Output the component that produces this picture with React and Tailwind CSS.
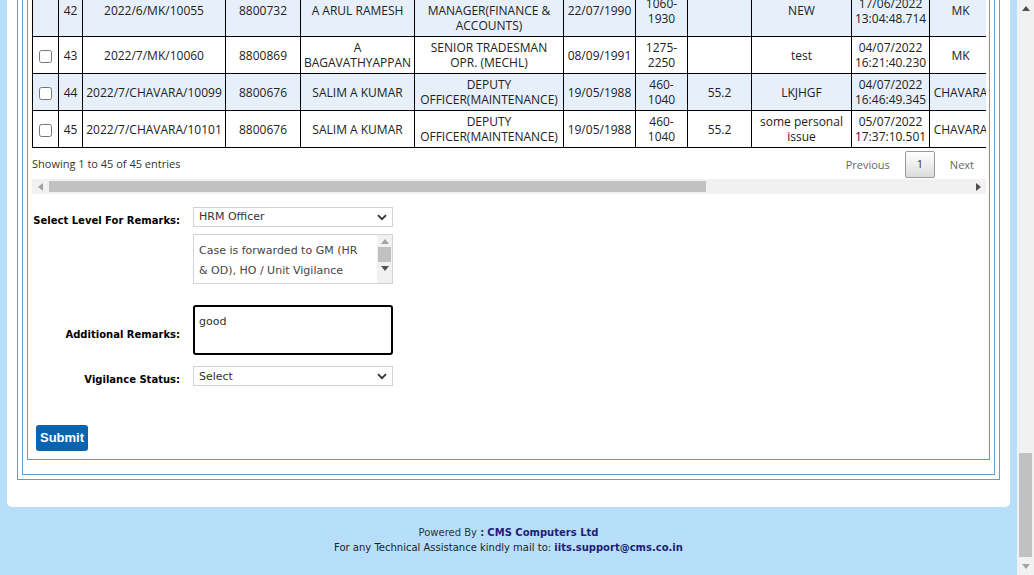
import React from 'react';

const colWidths = [
  'w-[26px]', 'w-[24px]', 'w-[143px]', 'w-[75px]', 'w-[114px]', 'w-[149px]',
  'w-[72px]', 'w-[52px]', 'w-[64px]', 'w-[100px]', 'w-[78px]', 'w-[62px]',
  'w-[125px]', 'w-[125px]', 'w-[126px]',
];

const rows = [
  {
    sl: 42, no: '2022/6/MK/10055', emp: '8800732', name: 'A ARUL RAMESH',
    desig: 'DEPUTY\nMANAGER(FINANCE &\nACCOUNTS)', dob: '22/07/1990', scale: '1060-\n1930',
    pct: '', remark: 'NEW', dt: '17/06/2022\n13:04:48.714', unit: 'MK', box: false,
  },
  {
    sl: 43, no: '2022/7/MK/10060', emp: '8800869', name: 'A\nBAGAVATHYAPPAN',
    desig: 'SENIOR TRADESMAN\nOPR. (MECHL)', dob: '08/09/1991', scale: '1275-\n2250',
    pct: '', remark: 'test', dt: '04/07/2022\n16:21:40.230', unit: 'MK', box: true,
  },
  {
    sl: 44, no: '2022/7/CHAVARA/10099', emp: '8800676', name: 'SALIM A KUMAR',
    desig: 'DEPUTY\nOFFICER(MAINTENANCE)', dob: '19/05/1988', scale: '460-\n1040',
    pct: '55.2', remark: 'LKJHGF', dt: '04/07/2022\n16:46:49.345', unit: 'CHAVARA', box: true,
  },
  {
    sl: 45, no: '2022/7/CHAVARA/10101', emp: '8800676', name: 'SALIM A KUMAR',
    desig: 'DEPUTY\nOFFICER(MAINTENANCE)', dob: '19/05/1988', scale: '460-\n1040',
    pct: '55.2', remark: 'some personal\nissue', dt: '05/07/2022\n17:37:10.501', unit: 'CHAVARA', box: true,
  },
];

const cell = 'border border-black px-[2px] py-[3px] align-middle whitespace-pre-line overflow-hidden';

const Chevron = () => (
  <svg width="10" height="7" viewBox="0 0 10 7" className="shrink-0">
    <path d="M1 1.2 L5 5.2 L9 1.2" fill="none" stroke="#333" strokeWidth="1.8" />
  </svg>
);

const FakeSelect = ({ value, lift }) => (
  <div className="flex h-[20px] w-[200px] items-center justify-between border border-[#d0d4d9] bg-white pl-[5px] pr-[5px] text-[11px] text-[#333]">
    <span className={lift}>{value}</span>
    <Chevron />
  </div>
);

const Tri = ({ dir, color }) => {
  const pts = {
    up: '0,5 4,0 8,5',
    down: '0,0 8,0 4,5',
    left: '5,0 5,8 0,4',
    right: '0,0 0,8 5,4',
  }[dir];
  const w = dir === 'left' || dir === 'right' ? 5 : 8;
  const h = dir === 'left' || dir === 'right' ? 8 : 5;
  return (
    <svg width={w} height={h} viewBox={`0 0 ${w} ${h}`}>
      <polygon points={pts} fill={color} />
    </svg>
  );
};

const App = () => {
  return (
    <div className="flex h-[575px] w-full overflow-hidden bg-[#b8dff9]">
      {/* page content, scrolled to bottom */}
      <div className="flex min-w-0 flex-1 flex-col justify-end overflow-hidden">
        <div className="shrink-0 mx-[7px] rounded-b-[5px] bg-white px-[10px] pb-[27px]">
          <div className="border border-[#5b9fd6] px-[4px] pb-[4px]">
            <div className="border border-[#5b9fd6] px-[4px] pb-[14px]">
              <div className="border border-[#5b9fd6] pl-[4px] pr-[3px] pb-[8px] pt-[6px]">
                {/* table */}
                <div className="overflow-hidden" style={{ fontFamily: "'Open Sans', sans-serif" }}>
                  <table className="w-[1335px] table-fixed border-collapse text-center text-[12px] leading-[15px] text-[#222]">
                    <colgroup>
                      {colWidths.map((w, i) => (
                        <col key={i} className={w} />
                      ))}
                    </colgroup>
                    <tbody>
                      {rows.map((r, i) => (
                        <tr key={r.sl} className={i % 2 === 0 ? 'bg-[#e7effa]' : 'bg-white'}>
                          <td className={cell}>
                            {r.box && <input type="checkbox" className="m-0 h-[13px] w-[13px] align-middle" />}
                          </td>
                          <td className={cell}>{r.sl}</td>
                          <td className={cell}>{r.no}</td>
                          <td className={cell}>{r.emp}</td>
                          <td className={cell}>{r.name}</td>
                          <td className={cell}>{r.desig}</td>
                          <td className={cell}>{r.dob}</td>
                          <td className={cell}>{r.scale}</td>
                          <td className={cell}>{r.pct}</td>
                          <td className={cell}>{r.remark}</td>
                          <td className={cell}>{r.dt}</td>
                          <td className={cell + ' overflow-visible'}>{r.unit}</td>
                          <td className={cell}>Pending</td>
                          <td className={cell}>View</td>
                          <td className={cell}>Forward</td>
                        </tr>
                      ))}
                    </tbody>
                  </table>

                  {/* info + pagination */}
                  <div className="flex h-[31px] items-center justify-between text-[11px]">
                    <span className="pt-[2px] text-[#333]">Showing 1 to 45 of 45 entries</span>
                    <div className="flex items-center pr-[12px] pt-[1px] text-[#666]">
                      <span className="pt-[3px]">Previous</span>
                      <span className="mx-[15px] flex h-[27px] w-[30px] items-center justify-center rounded-[2px] border border-[#9a9a9a] bg-gradient-to-b from-white to-[#dcdcdc] pt-[1px] text-[#333]">
                        1
                      </span>
                      <span className="pt-[3px]">Next</span>
                    </div>
                  </div>

                  {/* horizontal scrollbar */}
                  <div className="flex h-[15px] items-center bg-[#f1f1f1]">
                    <div className="flex w-[17px] justify-center">
                      <Tri dir="left" color="#a3a3a3" />
                    </div>
                    <div className="h-[11px] w-[657px] bg-[#c1c1c1]" />
                    <div className="flex-1" />
                    <div className="flex w-[15px] justify-center">
                      <Tri dir="right" color="#505050" />
                    </div>
                  </div>
                </div>

                {/* form */}
                <div className="text-[10px]" style={{ fontFamily: "'DejaVu Sans', Verdana, sans-serif" }}>
                  <div className="mt-[13px] flex items-start">
                    <label className="mt-[8px] w-[148px] text-right font-bold leading-[12px] text-black">
                      Select Level For Remarks:
                    </label>
                    <div className="ml-[13px]">
                      <FakeSelect value="HRM Officer" lift="pt-[1px]" />
                    </div>
                  </div>

                  <div className="ml-[161px] mt-[7px] flex h-[50px] w-[200px] border border-[#d0d4d9] bg-white">
                    <div className="flex-1 pl-[5px] pt-[6px] text-[11px] leading-[20px] text-[#444]">
                      Case is forwarded to GM (HR
                      <br />
                      &amp; OD), HO / Unit Vigilance
                    </div>
                    <div className="flex w-[15px] flex-col items-center bg-[#f1f1f1] py-[4px]">
                      <Tri dir="up" color="#a3a3a3" />
                      <div className="mt-[3px] h-[15px] w-[13px] bg-[#c1c1c1]" />
                      <div className="mt-[4px]">
                        <Tri dir="down" color="#505050" />
                      </div>
                    </div>
                  </div>

                  <div className="mt-[21px] flex items-start">
                    <label className="mt-[24px] w-[148px] text-right font-bold leading-[12px] text-black">
                      Additional Remarks:
                    </label>
                    <div className="ml-[13px] h-[50px] w-[200px] rounded-[3px] border-2 border-black bg-white pl-[4px] pt-[7px] text-[11px] leading-[16px] text-[#333]">
                      good
                    </div>
                  </div>

                  <div className="mt-[11px] flex items-start">
                    <label className="mt-[8px] w-[148px] text-right font-bold leading-[12px] text-black">
                      Vigilance Status:
                    </label>
                    <div className="ml-[13px]">
                      <FakeSelect value="Select" lift="pt-[2px]" />
                    </div>
                  </div>

                  <button
                    className="ml-[4px] mt-[39px] flex h-[26px] w-[52px] items-center justify-center rounded-[3px] bg-[#0764b0] text-[13px] font-bold text-white"
                    style={{ fontFamily: "'Liberation Sans', Arial, sans-serif" }}
                  >
                    Submit
                  </button>
                </div>
              </div>
            </div>
          </div>
        </div>

        {/* footer */}
        <div
          className="h-[68px] shrink-0 pt-[18px] text-center text-[10px] leading-[15px]"
          style={{ fontFamily: "'DejaVu Sans', Verdana, sans-serif" }}
        >
          <div className="text-[#333]">
            Powered By <b>:</b> <b className="text-[#1d1d7a]">CMS Computers Ltd</b>
          </div>
          <div className="text-[#222]">
            For any Technical Assistance kindly mail to: <b className="text-[#1d1d7a]">iits.support@cms.co.in</b>
          </div>
        </div>
      </div>

      {/* browser scrollbar */}
      <div className="flex w-[17px] shrink-0 flex-col bg-[#f1f1f1]">
        <div className="flex h-[17px] items-center justify-center">
          <Tri dir="up" color="#505050" />
        </div>
        <div className="flex flex-1 flex-col justify-end px-[2px] pb-[1px]">
          <div className="h-[104px] bg-[#c1c1c1]" />
        </div>
        <div className="flex h-[17px] items-center justify-center">
          <Tri dir="down" color="#a3a3a3" />
        </div>
      </div>
    </div>
  );
};

export default App;
